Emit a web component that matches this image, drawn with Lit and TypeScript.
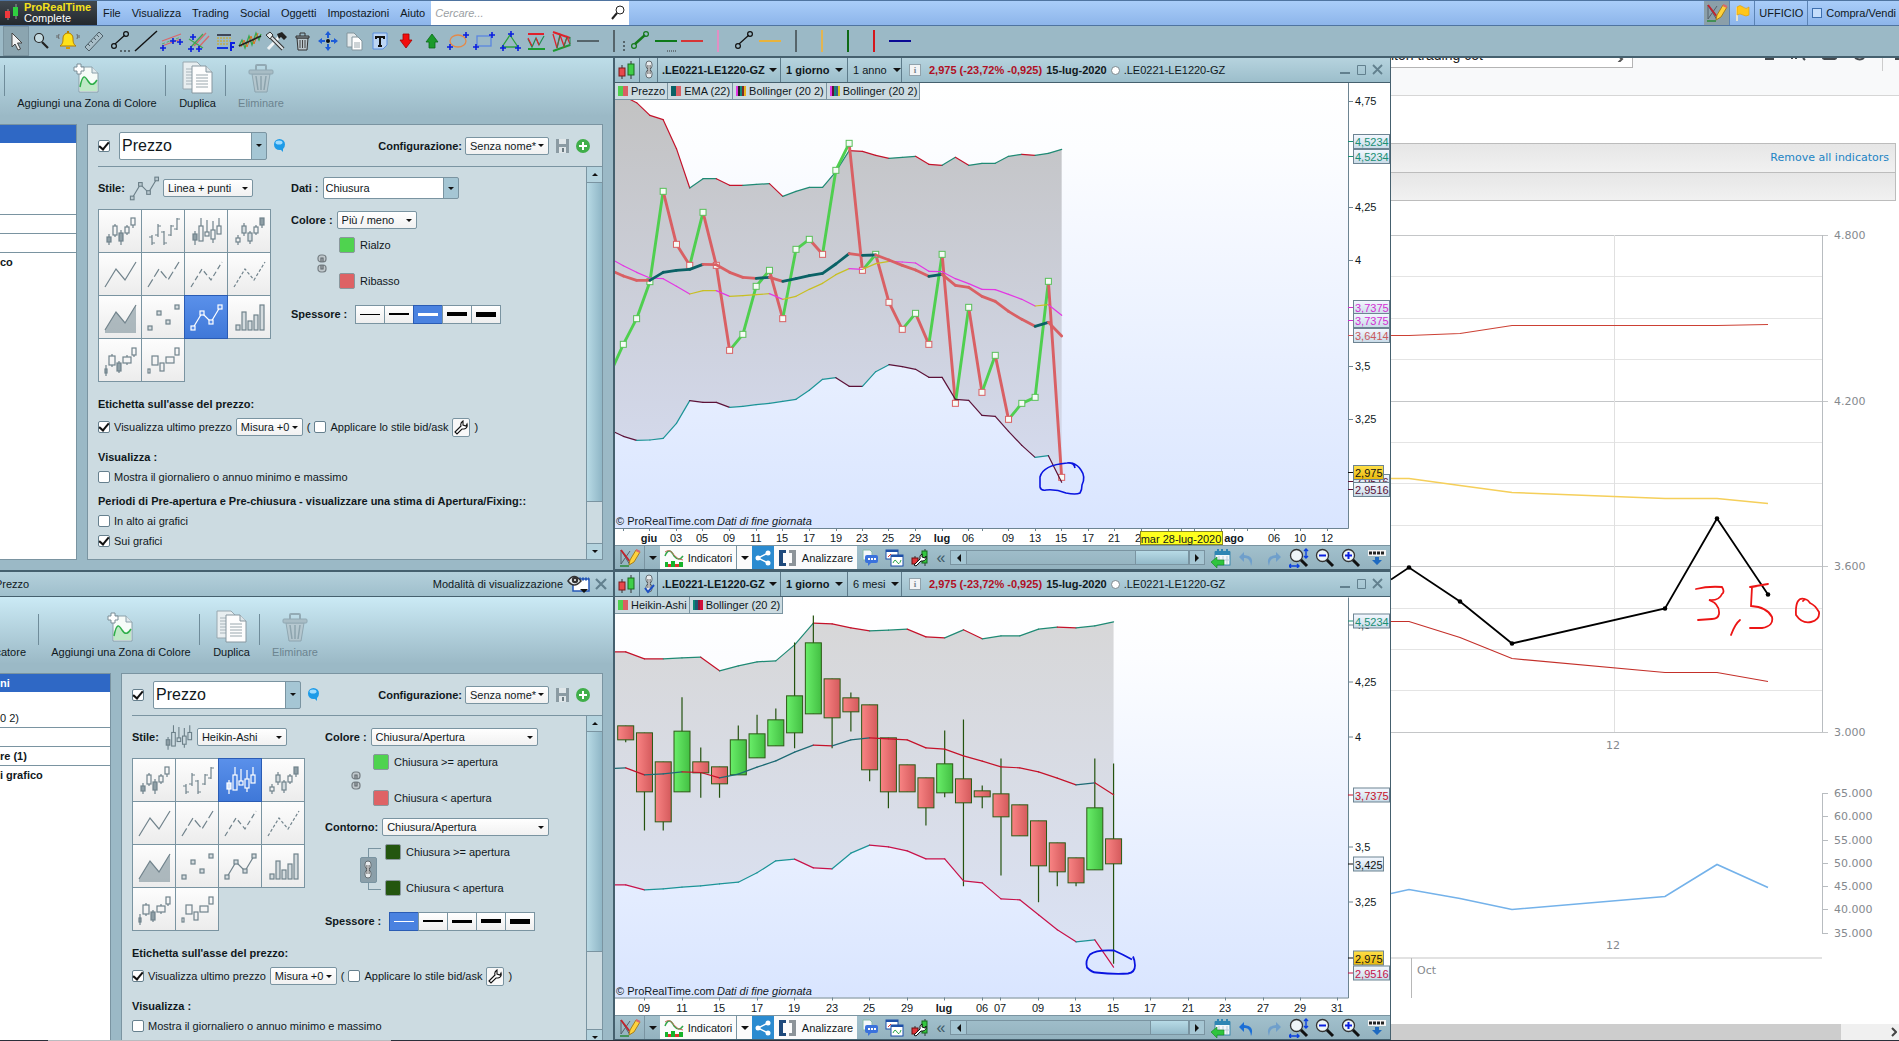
import { LitElement, html, svg, css, nothing } from "lit";
import { customElement, property } from "lit/decorators.js";
import { classMap } from "lit/directives/class-map.js";

/* ---------- shared styles ---------- */

const base = css`
  :host {
    --ink: #10181c;
    --edge: #7a94a1;
    --dark: #45606e;
    --steel: #9bb9c6;
    display: block;
    font: 11px/14px "Liberation Sans", Arial, sans-serif;
    color: var(--ink);
  }
  * { box-sizing: border-box; }
  svg { display: block; flex: none; }
  button, select, input { font: inherit; color: inherit; margin: 0; }
  button { border: 0; padding: 0; background: none; }
  .caret {
    width: 0; height: 0; flex: none;
    border: 4px solid transparent;
    border-top: 4px solid #111;
    border-bottom: 0;
  }
`;

/* ---------- small icon helpers ---------- */

const plus = (x: number, y: number) =>
  svg`<path d="M${x - 3} ${y}h6M${x} ${y - 3}v6" stroke="#0a1ee0" stroke-width="1.6" fill="none"/>`;

const segment = (c: string, w: number) => svg`
  <path d="M8 18L18 9" stroke=${c} stroke-width=${w}/>
  <circle cx="7" cy="20" r="2.4" fill="none" stroke=${c} stroke-width="1.2"/>
  <circle cx="19" cy="8" r="2.4" fill="none" stroke=${c} stroke-width="1.2"/>`;

const hbar = (c: string, w = 2) => svg`<path d="M2 15h22" stroke=${c} stroke-width=${w}/>`;
const vbar = (c: string, w = 2) => svg`<path d="M13 4v22" stroke=${c} stroke-width=${w}/>`;

const drawTools: [string, unknown][] = [
  ["Cursore", svg`<path d="M9 7v14l3-3 3 6 2.500-1-3-6h4.500z" fill="#f4f4f4" stroke="#444"/>`],
  ["Lente", svg`<circle cx="10" cy="12" r="4.500" fill="#c5dbe2" stroke="#222" stroke-width="1.200"/><path d="M13 16l6 6" stroke="#222" stroke-width="2.200"/>`],
  ["Allarme", svg`<path d="M5 20c3-2 3-5 3-8a5 5 0 0 1 10 0c0 3 0 6 3 8z" fill="#ffe11a" stroke="#b27b00"/><path d="M11 21h4v2h-4z" fill="#d89a00"/><path d="M13 5v2" stroke="#b27b00" stroke-width="2"/><path d="M4 8q-1 3 0 5M2 9v3M22 8q1 3 0 5M24 9v3" stroke="#666" fill="none"/>`],
  ["Righello", svg`<path d="M4 21L18 6l4 4L8 25z" fill="#a9bfc9" stroke="#4d5f68"/><path d="M7 18l2 2M10 15l2 2M13 12l2 2M16 9l2 2" stroke="#4d5f68"/>`],
  ["Segmento", svg`${segment("#111", 1.2)}<path d="M13 25h11" stroke="#111" stroke-dasharray="2 2"/>`],
  ["Retta", svg`<path d="M2 25L24 5" stroke="#111" stroke-width="1.400"/>`],
  ["Canale", svg`<path d="M3 15l19-7M3 20l19-7" stroke="#d8686c" stroke-width="1.300"/><path d="M3 18l19-7" stroke="#5db06a" stroke-dasharray="3 2"/>${plus(4, 22)}${plus(21, 16)}${plus(14, 15)}`],
  ["Pitchfork", svg`<path d="M9 20L21 7M13 22L24 10" stroke="#d8686c" stroke-width="1.300"/><path d="M4 13l14 9M6 21L18 8" stroke="#42a552" stroke-width="1.300"/>${plus(8, 11)}${plus(6, 23)}${plus(14, 23)}`],
  ["Fibonacci", svg`<path d="M6 9h14" stroke="#223" stroke-width="1.500"/><path d="M6 12h14M6 15h14M6 18h12" stroke="#d6a60d" stroke-dasharray="2 1"/><path d="M6 22h11" stroke="#1235e0" stroke-width="2"/><path d="M20 25v-8h4M20 21h3" stroke="#0a1ee0" stroke-width="2" fill="none"/>`],
  ["Regressione", svg`<path d="M2 20l3-6 3 8 4-12 3 9 4-12 3 7 2-6" stroke="#3aa64a" fill="none" stroke-width="1.300"/><path d="M4 21l3-7 3 7 4-11 3 8 4-11" stroke="#e2711c" fill="none"/><path d="M2 20L24 10" stroke="#222" stroke-width="1.600"/>`],
  ["Strumenti", svg`<path d="M5 23L18 9" stroke="#eef3f5" stroke-width="3"/><path d="M6 9l14 14" stroke="#333" stroke-width="4"/><path d="M6 9l14 14" stroke="#dfe6e9" stroke-width="2"/><path d="M14 8l5-2 5 5-3 3-3-3-2 2z" fill="#222"/><path d="M3 9l4-3 3 3-3 4z" fill="#e6ecee" stroke="#333"/>`],
  ["Cestino", svg`<path d="M8 12h11l-1 12H9z" fill="#b9c6cc" stroke="#333"/><path d="M11 14v8M13.500 14v8M16 14v8" stroke="#444"/><path d="M7 10h13v2H7z" fill="#8c9aa1" stroke="#333"/><path d="M11 10V7h5v3" stroke="#333" fill="none"/>`],
  ["Sposta", svg`<path d="M13 5l3 4h-6zM13 25l3-4h-6zM3 15l4-3v6zM23 15l-4-3v6z" fill="#1c5bd8"/><path d="M13 8v4M13 18v4M6 15h4M16 15h4" stroke="#1c5bd8" stroke-width="2"/><circle cx="13" cy="15" r="2" fill="#111"/>`],
  ["Copia", svg`<path d="M6 7h7l3 3v11H6z" fill="#e4eaec" stroke="#83959d"/><path d="M11 11h6l4 4v9H11z" fill="#fff" stroke="#83959d"/><path d="M13 17h6M13 19h6M13 21h6" stroke="#9aa7ad"/>`],
  ["Testo", svg`<path d="M6 7h14v12l-4 4H6z" fill="#bcd5f3" stroke="#5a8ede"/><path d="M9 13v-2h8v2M13 11v8M11 20h4" stroke="#111" stroke-width="2" fill="none"/>`],
  ["Freccia giù", svg`<path d="M10 8h6v6h3l-6 8-6-8h3z" fill="#f20d0d" stroke="#a80000" stroke-width=".8"/>`],
  ["Freccia su", svg`<path d="M10 22h6v-6h3l-6-8-6 8h3z" fill="#1a9a2a" stroke="#0b6a18" stroke-width=".8"/>`],
  ["Ellisse", svg`<ellipse cx="13" cy="15" rx="8" ry="6" fill="none" stroke="#e38a4a" stroke-width="1.300"/>${plus(21, 9)}${plus(5, 21)}`],
  ["Rettangolo", svg`<rect x="6" y="10" width="14" height="10" fill="none" stroke="#5a86e0" stroke-width="1.300"/>${plus(21, 9)}${plus(5, 21)}`],
  ["Triangolo", svg`<path d="M13 9l8 12H5z" fill="none" stroke="#2da03e" stroke-width="1.300"/>${plus(14, 8)}${plus(6, 22)}${plus(21, 22)}`],
  ["Figura W", svg`<path d="M5 8h16" stroke="#e0202b" stroke-width="2"/><path d="M5 23h17" stroke="#1d9a32" stroke-width="2"/><path d="M5 13l4 8 4-9 3 7 5-9" fill="none" stroke="#1f8a50" stroke-width="1.200"/><path d="M5 12l4 8M13 12l3 7" stroke="#e0202b" stroke-width="1.200"/>`],
  ["Figura triangolo", svg`<path d="M4 6l17 6" stroke="#e0202b" stroke-width="2"/><path d="M4 25l17-6" stroke="#1d9a32" stroke-width="2"/><path d="M4 8l4 14 3-13 4 11 3-9 3 7" fill="none" stroke="#e0202b" stroke-width="1.300"/><path d="M8 22l3-13M15 20l3-9M21 11v9" stroke="#1f8a50"/>`],
  ["Linea orizzontale", hbar("#111", 1)],
  ["Linea verticale", svg`${vbar("#111", 1)}<path d="M23 15v11" stroke="#111" stroke-dasharray="2 2"/>`],
  ["Segmento verde", segment("#157a1c", 2.4)],
  ["Linea verde", svg`${hbar("#0d7a1a")}<path d="M14 25h9" stroke="#333" stroke-dasharray="1 1"/>`],
  ["Linea rossa", hbar("#d63535")],
  ["Verticale rosa", vbar("#e08fc4")],
  ["Segmento nero", segment("#111", 1.2)],
  ["Linea gialla", hbar("#e9b33c")],
  ["Verticale nera", vbar("#111", 1)],
  ["Verticale gialla", vbar("#e3b551")],
  ["Verticale verde", vbar("#0d6a14")],
  ["Verticale rossa", vbar("#d4161c")],
  ["Linea blu", hbar("#0a0a94")],
];

const candle = (x: number, y0: number, t: number, b: number, y1: number, w: number, fill: string) => svg`
  <path d="M${x} ${y0}V${t}M${x} ${b}V${y1}"/>
  <rect x=${x - w / 2} y=${t} width=${w} height=${b - t} fill=${fill}/>`;

type IconMaker = (solid: string, pale: string) => unknown;
const zig = "M6 34L17 16L26 27L37 9";
const square = (x: number, y: number, f: string) => svg`<rect x=${x - 2} y=${y - 2} width="4" height="4" fill=${f}/>`;
const points = (f: string) => [[8, 32], [17, 17], [26, 26], [35, 11]].map(([x, y]) => square(x, y, f));

const styleIcons: IconMaker[] = [
  (s) => [candle(10, 24, 27, 32, 35, 4, s), candle(16, 14, 16, 25, 27, 4, "none"), candle(22, 20, 23, 31, 35, 4, s), candle(28, 15, 17, 23, 25, 4, "none"), candle(34, 8, 8, 15, 18, 4, "none")],
  () => svg`<path d="M10 25v10M7 27h3M10 33h3M16 14v13M13 25h3M16 16h3M22 21v14M19 22h3M22 33h3M29 15v11M26 25h3M29 16h3M35 8v12M32 19h3M35 9h3" fill="none"/>`,
  (s) => [candle(10, 21, 24, 30, 35, 4, s), candle(16, 8, 16, 31, 31, 4, "none"), candle(22, 10, 22, 26, 26, 4, "none"), candle(28, 11, 20, 29, 33, 4, "none"), candle(34, 8, 16, 24, 24, 4, "none")],
  (s, p) => [candle(10, 25, 28, 32, 35, 4, "none"), candle(16, 13, 16, 23, 26, 4, p), candle(22, 21, 23, 31, 34, 4, p), candle(28, 15, 17, 23, 25, 4, "none"), candle(34, 8, 8, 15, 18, 4, s)],
  () => svg`<path d=${zig} fill="none"/>`,
  () => svg`<path d=${zig} fill="none" stroke-dasharray="9 3"/>`,
  () => svg`<path d=${zig} fill="none" stroke-dasharray="5 3"/>`,
  () => svg`<path d=${zig} fill="none" stroke-dasharray="3 2"/>`,
  (s) => svg`<path d="M6 34L17 16L26 27L37 9V37H6z" fill=${s} fill-opacity=".7" stroke="none"/><path d=${zig} fill="none"/>`,
  (_s, p) => points(p),
  (_s, p) => [svg`<path d="M8 32L17 17L26 26L35 11" fill="none"/>`, points(p)],
  (_s, p) => [[8, 29], [14, 16], [20, 25], [26, 19], [32, 9]].map(([x, y]) => svg`<rect x=${x} y=${y} width="4" height=${34 - y} fill=${p}/>`),
  (s) => [candle(7, 26, 30, 34, 37, 2, s), candle(13, 15, 17, 26, 28, 6, "none"), candle(20, 22, 24, 32, 34, 4, s), candle(28, 16, 18, 24, 26, 8, "none"), candle(35, 9, 9, 16, 18, 4, "none")],
  () => [candle(7, 30, 30, 34, 34, 2, "none"), candle(13, 17, 17, 26, 26, 6, "none"), candle(20, 24, 24, 32, 32, 4, "none"), candle(28, 18, 18, 24, 24, 8, "none"), candle(35, 9, 9, 16, 16, 4, "none")],
];

const styleNames = ["Candele", "Barre", "Heikin-Ashi", "Candele inverse", "Linea", "Linea tratteggiata lunga", "Linea tratteggiata", "Linea punteggiata", "Area", "Punti", "Linea + punti", "Istogramma", "Candle volume", "Equivolume"];

const styleIcon = (i: number, stroke: string, solid: string, pale: string) => html`
  <svg width="42" height="42" viewBox="0 0 42 42" stroke=${stroke} stroke-width="1.2">${styleIcons[i](solid, pale)}</svg>`;

/* ---------- settings panel ---------- */

const zoneIcon = html`<svg width="28" height="31" viewBox="0 0 28 31">
  <path d="M6 4h13l6 6v19H6z" fill="#f6fbf8" stroke="#8aa0aa"/>
  <path d="M7 24c3-16 6-9 8-6 3 5 6 4 9-1v11H7z" fill="#bfe9c6"/>
  <path d="M7 24c3-16 6-9 8-6 3 5 6 4 9-1" fill="none" stroke="#2fae4a" stroke-width="1.500"/>
  <path d="M19 4v6h6" fill="#dfe8ec" stroke="#8aa0aa"/>
  <path d="M4 1h4v3h3v4H8v3H4V8H1V4h3z" fill="#fff" stroke="#7a8d96"/></svg>`;
const copyIcon = html`<svg width="32" height="33" viewBox="0 0 32 33">
  <path d="M1 1h14l5 5v22H1z" fill="#e8eef0" stroke="#98a8b0"/>
  <path d="M4 8h6M4 11h6M4 14h6M4 17h6M4 20h6M4 23h6" stroke="#a8b4ba"/>
  <path d="M10 5h14l6 6v21H10z" fill="#fdfdfd" stroke="#8797a0"/><path d="M24 5v6h6" fill="#dde5e8" stroke="#8797a0"/>
  <path d="M14 14h12M14 17h12M14 20h12M14 23h12M14 26h12" stroke="#9aa7ad"/></svg>`;
const binIcon = html`<svg width="28" height="31" viewBox="0 0 28 31" opacity=".7">
  <path d="M5 11h18l-3 18H8z" fill="#b6c3c9" stroke="#8296a0"/>
  <path d="M9 13l2 14M14 13v14M19 13l-2 14" stroke="#7f929b" stroke-width="1.500"/>
  <rect x="2" y="7" width="24" height="4" rx="1" fill="#a3b3ba" stroke="#8296a0"/>
  <path d="M9 7V3q0-1 1-1h8q1 0 1 1v4" fill="none" stroke="#8296a0" stroke-width="2"/></svg>`;
const looseChain = html`<svg width="10" height="19" viewBox="0 0 10 19" fill="none" stroke="#757e83" stroke-width="1.200">
  <rect x="1" y="1" width="8" height="7" rx="3" fill="#c0c8cc"/><rect x="1" y="11" width="8" height="7" rx="3" fill="#c0c8cc"/>
  <path d="M4 8V4h2v4M4 11v4h2v-4" stroke="#5f686d"/></svg>`;
const chain = (done: boolean) => html`<svg width="14" height="20" viewBox="0 0 14 20" fill="none" stroke="#666f74">
  <rect x="4" y="1" width="6" height="8" rx="3" fill="#e8ecee"/><rect x="4" y="10" width="6" height="8" rx="3" fill="#e8ecee"/>
  <path d="M7 5v9" stroke="#444" stroke-width="3"/><path d="M7 5v9" stroke="#fff" stroke-width="1.200"/>
  ${done ? svg`<path d="M3 14l3 4 6-7" stroke="#1c4fc4" stroke-width="2"/>` : nothing}</svg>`;

@customElement("style-panel")
export class StylePanel extends LitElement {
  @property() mode: "line" | "heikin" = "line";

  static styles = [base, css`
    :host { display: flex; flex-direction: column; min-height: 0; overflow: hidden; background: var(--steel); border-top: 2px solid var(--dark); }
    .title { display: flex; align-items: center; height: 25px; flex: none; border-bottom: 1px solid var(--dark); background: linear-gradient(#b4d0db, #9fbfcc); padding-right: 6px; }
    .title .name { margin-right: auto; margin-left: -5px; }
    .title button { width: 12px; margin-left: 4px; }
    .title .eye { width: 24px; }
    .head { display: flex; align-items: flex-end; flex: none; height: 66px; padding: 0 0 14px 4px; background: linear-gradient(#bddde8, var(--steel) 88%); }
    .heikin .head { height: 76px; padding-left: 38px; background: linear-gradient(#cbeaf5, var(--steel) 88%); position: relative; }
    .act { display: flex; flex-direction: column; align-items: center; justify-content: flex-end; gap: 2px; height: 46px; white-space: nowrap; }
    .act span { height: 14px; }
    .act.zone { width: 160px; padding-left: 4px; }
    .act.dup { width: 59px; padding-left: 4px; }
    .act.del { width: 70px; color: #6c8490; }
    .bar { width: 1px; height: 31px; background: #6f8c9a; align-self: flex-start; margin-top: 7px; }
    .heikin .bar { margin-top: 17px; }
    .clipped { position: absolute; left: -7px; bottom: 14px; height: 14px; }
    .body { display: flex; flex: 1; min-height: 0; gap: 10px; padding: 0 10px 10px 0; }
    .heikin .body { margin-bottom: -6px; padding-bottom: 0; }
    .list { width: 77px; flex: none; background: #fff; border: 1px solid var(--edge); border-left: 0; overflow: hidden; font-weight: bold; }
    .heikin .list { width: 111px; }
    .list div { height: 19px; line-height: 19px; white-space: nowrap; }
    .list .plain { font-weight: normal; }
    .list .on { height: 18px; background: #2f68c5; color: #fff; }
    .list .rule { border-bottom: 1px solid var(--edge); }
    .list .blank { height: 53px; }
    .heikin .list .blank { height: 17px; }
    .card { flex: 1; min-width: 0; display: flex; flex-direction: column; background: #ccdbe1; border: 1px solid var(--edge); }
    .top { display: flex; align-items: center; height: 42px; flex: none; margin-left: 10px; padding-right: 12px; border-bottom: 1px solid var(--edge); }
    .top .push { margin-left: auto; }
    .top .file { margin-left: 3px; }
    b { font-weight: bold; white-space: nowrap; }
    .cols { display: flex; flex: 1; min-height: 0; }
    .main { flex: 1; min-width: 0; padding-left: 10px; overflow: hidden; white-space: nowrap; }
    .split { display: flex; gap: 20px; height: 215px; }
    .left { width: 173px; flex: none; }
    .right { padding-top: 5px; }
    .row { display: flex; align-items: center; height: 20px; gap: 4px; }
    .stile { height: 42px; }
    .stile svg { margin: 0 -4px; width: 38px; height: 38px; }
    .grid { display: flex; flex-wrap: wrap; width: 174px; padding: 0 1px 1px 0; }
    .cell { width: 44px; height: 44px; margin: 0 -1px -1px 0; border: 1px solid var(--edge); background: linear-gradient(#fdfdfd, #ececec); }
    .cell.on { background: linear-gradient(#5a90ea, #3f78d8); border-color: #2a5cb4; position: relative; }
    .pick { position: relative; display: inline-flex; align-items: center; height: 18px; flex: none; }
    .pick::after { content: ""; position: absolute; right: 5px; border: 3px solid transparent; border-top-color: #111; border-bottom: 0; pointer-events: none; }
    .pick select { appearance: none; width: 100%; height: 100%; padding: 0 10px 0 4px; border: 1px solid var(--edge); border-radius: 2px; background: linear-gradient(#fff, #f1f1f1); }
    .pick.box select { background: linear-gradient(90deg, #fff calc(100% - 15px), var(--edge) calc(100% - 15px), var(--edge) calc(100% - 14px), #a5c6d4 calc(100% - 14px)); padding-left: 2px; }
    .price { width: 148px; height: 28px; font-size: 16px; margin: 0 6px 0 9px; }
    .w84 { width: 84px; } .w90 { width: 90px; } .w80 { width: 80px; } .w67 { width: 67px; } .w167 { width: 167px; }
    .data { width: 136px; height: 22px; }
    input[type="checkbox"] { appearance: none; width: 12px; height: 12px; flex: none; background: #fff; border: 1px solid #66808e; border-radius: 2px; display: grid; place-items: center; }
    input:checked::before { content: ""; width: 4px; height: 8px; margin-top: -2px; border: solid #111; border-width: 0 2px 2px 0; rotate: 40deg; }
    .pair { display: grid; grid-template-columns: 48px 1fr; }
    .pair.wide { grid-template-columns: 60px 1fr; }
    .pair .lk { display: grid; place-items: center; padding-left: 14px; }
    .pair .tone { display: flex; flex-direction: column; gap: 18px; }
    .tone label { display: flex; align-items: center; gap: 5px; height: 18px; }
    .tone i { width: 16px; height: 16px; border: 1px solid #8a979d; border-radius: 2px; }
    .joined { display: grid; place-items: center; width: 17px; height: 26px; background: #8b9fa9; border: 1px solid var(--edge); border-radius: 2px; }
    .wide .lk { padding: 0; position: relative; }
    .wide .lk::before { content: ""; position: absolute; left: 43px; right: 4px; top: 5px; bottom: 7px; border: 1px solid var(--edge); border-right: 0; }
    .wide .joined { position: relative; margin-left: 26px; }
    .f { height: 32px; }
    .gap { margin-top: 4px; }
    .weights { margin-top: 14px; gap: 8px; }
    .widths { display: flex; }
    .widths button { display: grid; place-items: center; width: 30px; height: 19px; margin-right: -1px; border: 1px solid var(--edge); background: linear-gradient(#fff, #eee); }
    .widths i { width: 20px; background: #000; }
    .widths .on { background: #4a82e0; border-color: #2a5cb4; }
    .widths .on i { background: #fff; }
    .sect { margin-top: 12px; }
    .s7 { margin-top: 7px; }
    .tall { height: 26px; }
    .wr { width: 18px; height: 19px; border: 1px solid var(--edge); border-radius: 2px; background: #f8f8f8; display: grid; place-items: center; }
    .scroll { width: 16px; flex: none; display: flex; flex-direction: column; border-left: 1px solid var(--edge); background: #ccdbe1; }
    .scroll button { height: 15px; flex: none; display: grid; place-items: center; background: #b4d3de; }
    .scroll .thumb { flex: 0 1 320px; border: solid var(--edge); border-width: 1px 0; background: linear-gradient(90deg, #b8dae5, #8fb6c6); }
    .heikin .scroll .thumb { flex-basis: 221px; }
    .scroll .rest { flex: 1 0 0; border-bottom: 1px solid var(--edge); }
    .scroll .caret { border-width: 3px 3px 0; }
    .up { rotate: 180deg; }
    .wrap { display: flex; flex-direction: column; flex: 1; min-height: 0; }
  `];

  private pick(id: string, text: string, cls: string) {
    return html`<span class="pick ${cls}"><select id=${id} aria-label=${text}><option>${text}</option></select></span>`;
  }

  private pair(up: string, down: string, c1: string, c2: string, linked = false) {
    return html`<div class=${classMap({ pair: true, wide: linked })}>
      <div class="lk">${linked ? html`<button class="joined" aria-label="Colori collegati">${chain(false)}</button>` : looseChain}</div>
      <div class="tone">
        <label><i style="background:${c1}"></i>${up}</label>
        <label><i style="background:${c2}"></i>${down}</label>
      </div></div>`;
  }

  private weights(active: number) {
    return html`<div class="row weights"><b>Spessore :</b><div class="widths">
      ${[1, 2, 3, 4, 5].map((w, i) => html`<button class=${i === active ? "on" : ""} aria-label="Spessore ${w}"><i style="height:${w}px"></i></button>`)}
    </div></div>`;
  }

  render() {
    const line = this.mode === "line";
    const active = line ? 10 : 2;
    return html`<div class="wrap ${this.mode}">
      ${line ? nothing : html`<div class="title"><span class="name">Prezzo</span><span>Modalità di visualizzazione</span>
        <button class="eye" aria-label="Vista"><svg width="24" height="20" viewBox="0 0 24 20">
          <path d="M6 5h16v12H6z" fill="#fff" stroke="#2558b8" stroke-width="1.500"/><path d="M6 5h16" stroke="#2558b8" stroke-width="3" stroke-dasharray="2 1"/>
          <path d="M1 7q6-9 13 0-7 8-13 0z" fill="#e8eef0" stroke="#333" stroke-width="1.500"/><circle cx="8" cy="6" r="3.200" fill="#333"/><circle cx="8" cy="6" r="1" fill="#fff"/>
          <path d="M13 15h8l-4 4z" fill="#111"/></svg></button>
        <button aria-label="Chiudi"><svg width="12" height="12" viewBox="0 0 12 12"><path d="M1 1l10 10M11 1L1 11" stroke="#62808e" stroke-width="2.200"/></svg></button></div>`}
      <div class="head">
        ${line ? nothing : html`<span class="clipped">icatore</span>`}
        <i class="bar"></i><button class="act zone">${zoneIcon}<span>Aggiungi una Zona di Colore</span></button>
        <i class="bar"></i><button class="act dup">${copyIcon}<span>Duplica</span></button>
        <i class="bar"></i><button class="act del" disabled>${binIcon}<span>Eliminare</span></button>
      </div>
      <div class="body">
        <div class="list">${line
          ? html`<div class="on"></div><div class="blank"></div><div class="rule"></div><div class="rule"></div><div class="rule"></div><div>co</div>`
          : html`<div class="on">ni</div><div class="blank"></div><div class="rule plain">0 2)</div><div class="rule"></div><div class="rule">re (1)</div><div>i grafico</div>`}
        </div>
        <div class="card">
          <div class="top">
            <input type="checkbox" checked aria-label="Mostra prezzo" />
            ${this.pick("name", "Prezzo", "box price")}
            <svg width="13" height="13" viewBox="0 0 13 13"><circle cx="6.500" cy="5.500" r="5.500" fill="#1d9be8"/><ellipse cx="6" cy="3.500" rx="3.500" ry="2" fill="#9fdcff"/><path d="M7 10l3 3v-4z" fill="#1d9be8"/></svg>
            <b class="push">Configurazione:&nbsp;</b>${this.pick("conf", "Senza nome*", "w84")}
            <svg class="file" width="38" height="14" viewBox="0 0 38 14"><path d="M4 0h13v14H4z" fill="#8b9ba3"/><path d="M7 0h7v5H7zM7 8h7v6H7z" fill="#dfe6e9"/><path d="M11 9v4" stroke="#6c7b82" stroke-width="2"/><circle cx="31" cy="7" r="7" fill="#3fae49"/><path d="M31 3v8M27 7h8" stroke="#fff" stroke-width="2"/></svg>
          </div>
          <div class="cols">
            <div class="main">
              <div class="split">
                <div class="left">
                  <div class="row stile"><b>Stile:</b>${styleIcon(active, "#6b7f88", "#8c9da5", "#b9c9d0")}${this.pick("stile", line ? "Linea + punti" : "Heikin-Ashi", "w90")}</div>
                  <div class="grid">${styleNames.map((n, i) => html`<button class="cell ${i === active ? "on" : ""}" aria-label=${n}>
                    ${i === active ? styleIcon(i, "#fff", "#d6e4fb", "#5a90ea") : styleIcon(i, "#71838c", "#8f9fa6", "#d5dcdf")}</button>`)}</div>
                </div>
                <div class="right">
                  ${line ? html`
                    <div class="row f"><b>Dati :</b>${this.pick("dati", "Chiusura", "box data")}</div>
                    <div class="row f"><b>Colore :</b>${this.pick("col", "Più / meno", "w80")}</div>
                    ${this.pair("Rialzo", "Ribasso", "#4fd34f", "#de6265")}${this.weights(2)}`
                  : html`
                    <div class="row f"><b>Colore :</b>${this.pick("col", "Chiusura/Apertura", "w167")}</div>
                    ${this.pair("Chiusura >= apertura", "Chiusura < apertura", "#4fd34f", "#de6265")}
                    <div class="row f gap"><b>Contorno:</b>${this.pick("cont", "Chiusura/Apertura", "w167")}</div>
                    ${this.pair("Chiusura >= apertura", "Chiusura < apertura", "#24560f", "#24560f", true)}${this.weights(0)}`}
                </div>
              </div>
              <div class="row sect"><b>Etichetta sull'asse del prezzo:</b></div>
              <div class="row tall"><input id="last" type="checkbox" checked /><label for="last">Visualizza ultimo prezzo</label>${this.pick("mis", "Misura +0", "w67")}<span>(</span><input id="bid" type="checkbox" /><label for="bid">Applicare lo stile bid/ask</label>
                <button class="wr" aria-label="Impostazioni stile"><svg width="14" height="15" viewBox="0 0 14 15"><path d="M1 12l6-6q-1-3 2-5v4l3 1 1-2q1 4-3 5H8l-5 5z" fill="#fff" stroke="#111" stroke-width="1.100"/></svg></button><span>)</span></div>
              <div class="row s7"><b>Visualizza :</b></div>
              <div class="row"><input id="mm" type="checkbox" /><label for="mm">Mostra il giornaliero o annuo minimo e massimo</label></div>
              ${line ? html`
                <div class="row gap"><b>Periodi di Pre-apertura e Pre-chiusura - visualizzare una stima di Apertura/Fixing::</b></div>
                <div class="row"><input id="alto" type="checkbox" /><label for="alto">In alto ai grafici</label></div>
                <div class="row"><input id="sui" type="checkbox" checked /><label for="sui">Sui grafici</label></div>` : nothing}
            </div>
            <div class="scroll"><button aria-label="Su"><i class="caret up"></i></button><i class="thumb"></i><i class="rest"></i><button aria-label="Giù"><i class="caret"></i></button></div>
          </div>
        </div>
      </div></div>`;
  }
}

/* ---------- chart window ---------- */

type Pt = [number, number];
/* Series levels are kept in thirds of a pixel below the origin row. */
const track = (x0: number, dx: number, y0: number, v: number[]): Pt[] =>
  v.map((n, i) => [x0 + dx * (i - 1), y0 + n / 3] as Pt);

/* A two-tone line: one colour while it climbs, another while it falls. */
const twoTone = (p: Pt[], up: string, down: string, w: number) => {
  let c = down;
  return p.slice(1).map((q, i) => {
    const a = p[i];
    if (q[1] < a[1]) c = up;
    else if (q[1] > a[1]) c = down;
    return svg`<path d="M${a[0]} ${a[1]}L${q[0]} ${q[1]}" stroke=${c} stroke-width=${w} stroke-linecap="round"/>`;
  });
};

const ring = (a: Pt[], b: Pt[]) => "M" + [...a, ...[...b].reverse()].map((p) => p.join(" ")).join("L") + "z";

const A = (v: number[]) => track(623.33, 13.283, 80, v);
const dayHigh = A([35, 48, 68, 106, 119, 206, 324, 296, 296, 316, 316, 313, 311, 349, 334, 322, 322, 275, 212, 214, 226, 235, 232, 229, 253, 256, 232, 256, 250, 250, 229, 223, 226, 220, 208]);
const dayLow = A([1050, 1069, 1081, 1080, 1075, 1030, 962, 967, 967, 982, 979, 974, 970, 964, 958, 931, 898, 893, 919, 919, 875, 854, 860, 868, 892, 892, 958, 961, 1006, 1009, 1054, 1096, 1132, 1127, 1207]);
const dayMid = A([535, 557, 577, 594, 596, 619, 642, 632, 632, 649, 647, 644, 641, 658, 649, 628, 610, 584, 566, 568, 551, 544, 546, 549, 574, 575, 596, 611, 628, 629, 643, 658, 678, 674, 706]);
const dayEma = A([570, 588, 601, 601, 577, 571, 568, 553, 554, 577, 592, 595, 592, 604, 596, 587, 580, 552, 521, 526, 525, 540, 556, 570, 589, 583, 616, 622, 649, 664, 694, 718, 739, 727, 768]);
const dayClose = A([881, 793, 716, 605, 334, 493, 556, 397, 556, 811, 763, 619, 571, 716, 508, 478, 523, 271, 190, 571, 523, 667, 748, 700, 793, 523, 970, 682, 937, 826, 1018, 970, 952, 604, 1192]);

const B = (v: number[]) => track(625.71, 18.764, 570, v);
const haHigh = B([244, 244, 265, 265, 262, 260, 301, 286, 274, 271, 223, 158, 160, 172, 181, 179, 176, 199, 202, 178, 205, 196, 196, 176, 170, 172, 166, 154]);
const haMid = B([595, 592, 613, 610, 604, 606, 622, 611, 590, 571, 545, 524, 526, 508, 502, 505, 508, 532, 536, 556, 572, 589, 592, 604, 623, 643, 637, 673]);
const haLow = B([943, 943, 958, 955, 950, 946, 940, 935, 907, 871, 866, 892, 895, 848, 824, 829, 841, 865, 865, 931, 937, 985, 988, 1033, 1078, 1114, 1108, 1190]);
/* high, body top, body bottom, low, rising */
const candles: [number, number, number, number, number][] = [
  [466, 466, 508, 515, 0], [487, 487, 664, 780, 0], [574, 574, 754, 780, 0], [380, 482, 664, 664, 1], [531, 574, 607, 682, 0],
  [589, 589, 640, 682, 0], [465, 508, 613, 613, 1], [433, 490, 562, 562, 1], [414, 448, 526, 526, 1], [216, 376, 487, 533, 1],
  [135, 217, 430, 430, 1], [325, 325, 442, 533, 0], [366, 382, 424, 483, 0], [403, 403, 598, 632, 0], [502, 502, 664, 713, 0],
  [583, 583, 664, 664, 0], [622, 622, 712, 765, 0], [480, 580, 667, 680, 1], [447, 625, 697, 947, 0], [645, 661, 679, 713, 0],
  [564, 670, 739, 915, 0], [703, 703, 796, 796, 0], [751, 751, 886, 995, 0], [817, 817, 904, 947, 0], [862, 862, 937, 947, 0],
  [564, 712, 898, 898, 1], [579, 805, 880, 1180, 0],
];

type Tag = [y: number, text: string, color: string, kind?: string];
interface Win {
  period: string;
  done: boolean;
  legend: [string, string[]][];
  top: number;
  base: number;
  prices: [number, string][];
  tags: Tag[];
  dates: [number, string][];
  ticks: number[];
  thumb: number;
}

const windows: Record<string, Win> = {
  day: {
    period: "1 anno", done: false,
    legend: [["Prezzo", ["#4fcf4f", "#d96064"]], ["EMA (22)", ["#0a6266", "#d96064"]], ["Bollinger (20 2)", ["#e337e3", "#222", "#12897a", "#7a2a2a", "#e8b21c"]], ["Bollinger (20 2)", ["#e337e3", "#5c1238", "#12897a", "#3b5c8a", "#d6c61c"]]],
    top: 83, base: 528,
    prices: [[101, "4,75"], [207, "4,25"], [260, "4"], [366, "3,5"], [419, "3,25"]],
    tags: [[134, "4,5234", "#1a8f74"], [149, "4,5234", "#1a8f74"], [300, "3,7375", "#d22fd2"], [313, "3,7375", "#d22fd2"], [328, "3,6414", "#c9585c"], [474, "2,9516", "#5c1238"], [482, "2,9516", "#5c1238"], [465, "2,975", "#111", "gold"]],
    dates: [[649, "giu"], [676, "03"], [702, "05"], [729, "09"], [756, "11"], [782, "15"], [809, "17"], [836, "19"], [862, "23"], [888, "25"], [915, "29"], [942, "lug"], [968, "06"], [1008, "09"], [1035, "13"], [1061, "15"], [1088, "17"], [1114, "21"], [1141, "23"], [1234, "ago"], [1274, "06"], [1300, "10"], [1327, "12"]],
    ticks: [623, 982, 1168, 1181, 1194, 1221, 1247],
    thumb: 54,
  },
  ha: {
    period: "6 mesi", done: true,
    legend: [["Heikin-Ashi", ["#4fcf4f", "#d96064"]], ["Bollinger (20 2)", ["#0a8a78", "#1d5a74", "#8a1a3a", "#d0103a"]]],
    top: 597, base: 997,
    prices: [[624, "4,5"], [681, "4,25"], [736, "4"], [846, "3,5"], [901, "3,25"]],
    tags: [[613, "4,5234", "#1a8f74"], [787, "3,7375", "#c4122a"], [856, "3,425", "#111", "short"], [965, "2,9516", "#c4124a"], [950, "2,975", "#111", "gold"]],
    dates: [[644, "09"], [682, "11"], [719, "15"], [757, "17"], [794, "19"], [832, "23"], [869, "25"], [907, "29"], [944, "lug"], [982, "06"], [1000, "07"], [1038, "09"], [1075, "13"], [1113, "15"], [1150, "17"], [1188, "21"], [1225, "23"], [1263, "27"], [1300, "29"], [1337, "31"]],
    ticks: [],
    thumb: 39,
  },
};

const pencil = html`<svg width="22" height="20" viewBox="0 0 22 20"><path d="M1 18h9" stroke="#2a8a3a" stroke-width="1.500"/><path d="M2 2l9 15M2 2v14l9-13" fill="none" stroke="#55606a"/><path d="M2 2l10 13" stroke="#c4202a" stroke-width="1.800"/><path d="M10 17l1-5 6-10 4 2-6 10z" fill="#ffd23c" stroke="#a8801a"/><path d="M17 2l4 2" stroke="#d96a6a" stroke-width="2"/></svg>`;
const lens = (inner: unknown) => html`<svg width="20" height="20" viewBox="0 0 20 20"><path d="M11 11l7 7" stroke="#111" stroke-width="3"/><circle cx="7.500" cy="7.500" r="6" fill="#eef5f8" stroke="#333" stroke-width="1.300"/>${inner}</svg>`;
const curve = (c: string) => svg`<path d="M6 3L1 8l5 5V9q6-1 7 8 4-10-7-11z" fill=${c}/>`;

@customElement("chart-window")
export class ChartWindow extends LitElement {
  @property() name = "day";

  static styles = [base, css`
    :host { display: flex; flex-direction: column; min-height: 0; border: solid var(--dark); border-width: 2px 1px 0 2px; overflow: hidden; background: #fff; }
    .title, .tools { display: flex; align-items: stretch; flex: none; white-space: nowrap; height: 25px; }
    .title { border-bottom: 1px solid var(--dark); background: linear-gradient(#b6d3de, #9cbecb); }
    .title > * { display: flex; align-items: center; }
    .cell { border-right: 1px solid #5d7b8a; padding: 0 5px; gap: 6px; }
    .cell.i { padding: 0 2px; width: 25px; justify-content: center; }
    .cell.c { width: 18px; padding: 0; justify-content: center; }
    .sym { width: 123px; padding: 0 6px 0 4px; gap: 4px; }
    .uno { width: 67px; justify-content: space-between; }
    .per { width: 54px; justify-content: space-between; }
    .quote { font-weight: bold; padding-left: 7px; gap: 4px; }
    .quote .info { display: grid; place-items: center; width: 12px; height: 12px; background: #f2f4f5; border: 1px solid #90a2ab; font: bold 9px/10px "Liberation Serif", serif; color: #76868e; margin-right: 4px; }
    .quote em { font-style: normal; color: #b00f24; }
    .quote .dot { width: 9px; height: 9px; border-radius: 50%; background: #fff; border: 1px solid #7c898f; }
    .quote .sub { font-weight: normal; }
    .sys { margin-left: auto; gap: 5px; padding-right: 6px; }
    .plot { position: relative; flex: 1; min-height: 0; }
    .plot > svg { width: 100%; height: 100%; }
    .legend { position: absolute; left: 0; top: 0; display: flex; }
    .legend button { display: flex; align-items: center; gap: 3px; height: 17px; padding: 0 2px 0 3px; background: #ccdbe1; border: solid var(--edge); border-width: 0 1px 1px 0; white-space: nowrap; }
    .sw { display: flex; width: 10px; height: 10px; }
    .sw i { flex: 1; }
    .tip { fill: #ffff1e; stroke: #8a8a20; }
    text { font: 11px "Liberation Sans", Arial, sans-serif; fill: #10181c; }
    .mid { text-anchor: middle; }
    .bold { font-weight: bold; }
    .ital { font-style: italic; }
    .tools { background: linear-gradient(#a2c0cc, #93b2bf); align-items: center; border-bottom: 1px solid var(--dark); border-top: 1px solid var(--edge); }
    .tools > button { display: flex; align-items: center; justify-content: center; height: 100%; flex: none; }
    .tools > .pen { width: 30px; border-right: 1px solid var(--edge); }
    .drop { width: 15px; }
    .white { background: #fbfbfb; }
    .ind { width: 77px; gap: 4px; border-right: 1px solid var(--edge); }
    .share { width: 22px; background: #2b8bd0; }
    .ana { width: 83px; gap: 5px; }
    .ic { width: 25px; }
    .w18 { width: 18px; color: #3e5a67; font-size: 16px; }
    .scroll { display: flex; flex: 1; height: 15px; border: 1px solid var(--edge); min-width: 0; }
    .scroll button { width: 15px; display: grid; place-items: center; background: #a5c6d3; }
    .scroll .track { flex: 1; border-left: 1px solid var(--edge); }
    .scroll .thumb { border: solid var(--edge); border-width: 0 1px; background: linear-gradient(#b7dae6, #94bac9); }
    .scroll .end { border-left: 1px solid var(--edge); }
    .l { rotate: 90deg; } .r { rotate: -90deg; }
    .view { display: flex; padding-left: 3px; }
    .view button { width: 26px; display: grid; place-items: center; }
  `];

  private drawDay() {
    return svg`
      <path d=${ring(dayHigh, dayLow)} fill="url(#band)"/>
      ${twoTone(dayHigh, "#1f8a74", "#c4122a", 1.2)}
      ${twoTone(dayClose, "#4fcf4f", "#d96064", 2.9)}
      ${dayClose.slice(1).map((p, i) => svg`<rect x=${p[0] - 3} y=${p[1] - 3} width="6" height="6" fill="#f6fbf6" stroke=${p[1] < dayClose[i][1] ? "#58c058" : "#d96064"}/>`)}
      ${twoTone(dayMid, "#c8bf22", "#e337e3", 1.2)}
      ${twoTone(dayEma, "#0a6266", "#d96064", 2.8)}
      ${twoTone(dayLow, "#1c9497", "#5c1238", 1.2)}
      <path d="M1075 468q-1-6-8-5-24 2-27 14l0 10q1 4 6 3 10-1 20 3 10 2 14 0 2-3 2-8 4-8-1-15-3-5-9-7" fill="none" stroke="#0a14e0" stroke-width="1.600"/>`;
  }

  private drawHa() {
    return svg`
      <path d=${ring(haHigh, haLow)} fill="url(#band)"/>
      ${twoTone(haHigh, "#1f8a74", "#c4122a", 1.2)}
      ${candles.map(([h, t, b, l, up], i) => {
        const x = 625.71 + 18.764 * i;
        const Y = (n: number) => 570 + n / 3;
        return svg`<path d="M${x} ${Y(h)}V${Y(l)}" stroke="#24520f" stroke-width="1.200"/>
          <rect x=${x - 8} y=${Y(t)} width="16" height=${(b - t) / 3} fill=${up ? "url(#rise)" : "url(#fall)"} stroke="#2c5a14"/>`;
      })}
      ${twoTone(haMid, "#1d6a74", "#c4122a", 1.2)}
      ${twoTone(haLow, "#1c9497", "#c8124a", 1.2)}
      <path d="M1132 959q-9-5-18-9-18-1-24 4-5 6-3 13 5 5 9 5 18 2 32 1 7-1 7-8 0-5-2-9" fill="none" stroke="#0a14e0" stroke-width="1.800"/>`;
  }

  render() {
    const w = windows[this.name];
    const day = this.name === "day";
    const h = w.base + 17 - w.top;
    return html`
      <div class="title">
        <button class="cell i" aria-label="Tipo grafico"><svg width="20" height="20" viewBox="0 0 20 20"><path d="M5 5v14M14 1v18" stroke="#333"/><rect x="2" y="8" width="6" height="8" fill="#e8484c" stroke="#7a1a1a"/><rect x="11" y="4" width="6" height="11" fill="#3fce48" stroke="#1a6a1f"/></svg></button>
        <button class="cell c" aria-label="Collega">${chain(w.done)}</button>
        <button class="cell sym"><b>.LE0221-LE1220-GZ</b><i class="caret"></i></button>
        <button class="cell uno"><b>1 giorno</b><i class="caret"></i></button>
        <button class="cell per">${w.period}<i class="caret"></i></button>
        <span class="quote"><span class="info">i</span><em>2,975 (-23,72% -0,925)</em><span>15-lug-2020</span><i class="dot"></i><span class="sub">.LE0221-LE1220-GZ</span></span>
        <span class="sys">
          <button aria-label="Riduci"><svg width="12" height="12"><path d="M1 9h10" stroke="#62808e" stroke-width="2"/></svg></button>
          <button aria-label="Ingrandisci"><svg width="11" height="12"><path d="M1.500 1.500h8v9h-8z" fill="none" stroke="#62808e"/></svg></button>
          <button aria-label="Chiudi"><svg width="12" height="12"><path d="M1 1l9 9M10 1L1 10" stroke="#62808e" stroke-width="1.800"/></svg></button>
        </span>
      </div>
      <div class="plot">
        <svg viewBox="615 ${w.top} 775 ${h}">
          <defs>
            <linearGradient id="sky" x2="0" y2="1"><stop offset="0" stop-color="#fff"/><stop offset=".15" stop-color="#fcfdff"/><stop offset="1" stop-color="#d9e5ff"/></linearGradient>
            <linearGradient id="band" x2="0" y2="1"><stop offset="0" stop-color=${day ? "#c2c2c2" : "#d7d7d8"}/><stop offset="1" stop-color=${day ? "#d5dbef" : "#dae2f5"}/></linearGradient>
            <linearGradient id="rise"><stop offset="0" stop-color="#69ee69"/><stop offset="1" stop-color="#43bf43"/></linearGradient>
            <linearGradient id="fall"><stop offset="0" stop-color="#f98484"/><stop offset="1" stop-color="#d45a5c"/></linearGradient>
            <linearGradient id="tag" x2="0" y2="1"><stop offset="0" stop-color="#f4f8ff"/><stop offset="1" stop-color="#c9dbe8"/></linearGradient>
            <linearGradient id="gold" x2="0" y2="1"><stop offset="0" stop-color="#ffe04a"/><stop offset="1" stop-color="#e8b80c"/></linearGradient>
            <clipPath id="frame"><rect x="615" y=${w.top} width="733" height=${w.base - w.top}/></clipPath>
          </defs>
          <rect x="615" y=${w.top} width="733" height=${w.base - w.top} fill="url(#sky)"/>
          <g clip-path="url(#frame)" fill="none">${day ? this.drawDay() : this.drawHa()}</g>
          <path d="M1348.500 ${w.top}V${w.base}.5H615" fill="none" stroke="#6d8492"/>
          <text x="616" y=${w.base - 3}>© ProRealTime.com</text><text class="ital" x="717" y=${w.base - 3}>Dati di fine giornata</text>
          ${w.prices.map(([y, t]) => svg`<path d="M1348 ${y}.5h5" stroke="#6d8492"/><text x="1355" y=${y + 4}>${t}</text>`)}
          ${w.tags.map(([y, t, c, k]) => svg`<path d="M1348 ${y + 7.5}h5" stroke=${c}/>
            <rect x="1353.500" y=${y + 0.5} width=${k ? 30 : 36} height="14" fill=${k === "gold" ? "url(#gold)" : "url(#tag)"} stroke="#6d8492"/>
            <text x="1355" y=${y + 12} style="fill:${c}">${t}</text>`)}
          ${[...w.dates.map((d) => d[0]), ...w.ticks].map((x) => svg`<path d="M${x}.5 ${w.base}v3" stroke="#6d8492"/>`)}
          ${w.dates.map(([x, t]) => svg`<text class=${/[a-z]/.test(t) ? "mid bold" : "mid"} x=${x} y=${w.base + 14}>${t}</text>`)}
          ${day ? svg`<rect class="tip" x="1140.500" y="531.500" width="82" height="13"/><text class="mid" x="1181" y="543">mar 28-lug-2020</text>` : nothing}
        </svg>
        <div class="legend">${w.legend.map(([t, cs]) => html`<button><span class="sw">${cs.map((c) => html`<i style="background:${c}"></i>`)}</span>${t}</button>`)}</div>
      </div>
      <div class="tools">
        <button class="pen" aria-label="Disegna">${pencil}</button>
        <button class="drop" aria-label="Altri disegni"><i class="caret"></i></button>
        <button class="ind white"><svg width="20" height="20" viewBox="0 0 20 20"><path d="M1 8q4-10 9 0 5 6 9 0" fill="none" stroke="#2fa84a" stroke-width="1.500"/><path d="M1 4q5-4 9 3 4 5 9 5" fill="none" stroke="#c96a5a"/><path d="M1 19v-5h3v2h3v-3h4v3h4v-2h4v5z" fill="#17b32c"/><path d="M4 16h3v3H4zM11 16h4v3h-4z" fill="#e0352f"/></svg>Indicatori</button>
        <button class="drop white" aria-label="Altri indicatori"><i class="caret"></i></button>
        <button class="share" aria-label="Condividi"><svg width="16" height="16" viewBox="0 0 16 16"><path d="M13 3L3 8l10 5" fill="none" stroke="#fff" stroke-width="1.500"/><circle cx="13" cy="3" r="2.500" fill="#fff"/><circle cx="3" cy="8" r="2.500" fill="#fff"/><circle cx="13" cy="13" r="2.500" fill="#fff"/></svg></button>
        <button class="ana white"><svg width="19" height="18" viewBox="0 0 19 18"><path d="M8 1H1v16h7v-3H5V4h3z" fill="#1f4a7c"/><path d="M11 1h7v16h-7v-3h3V4h-3z" fill="#8d9499"/></svg>Analizzare</button>
        <button class="ic" aria-label="Chat"><svg width="16" height="18" viewBox="0 0 16 18"><path d="M1 1h7l2 2v8H1z" fill="#f5f8fa" stroke="#8ba"/><rect x="3" y="6" width="13" height="8" rx="2" fill="#3a72dc"/><path d="M6 13v4l4-4z" fill="#3a72dc"/><path d="M6 10h8" stroke="#fff" stroke-width="2" stroke-dasharray="2 1"/></svg></button>
        <button class="ic" aria-label="Finestre"><svg width="19" height="18" viewBox="0 0 19 18"><rect x="1" y="1" width="12" height="9" fill="#fff" stroke="#1d4fa8"/><path d="M1 2h12" stroke="#1d4fa8" stroke-width="2"/><rect x="6" y="6" width="12" height="11" fill="#fff" stroke="#1d4fa8"/><path d="M6 7h12" stroke="#1d4fa8" stroke-width="2"/><path d="M8 14q2-5 4-1t4-2" fill="none" stroke="#2fa84a"/><path d="M3 8l3-3" stroke="#d33"/></svg></button>
        <button class="ic" aria-label="Opzioni"><svg width="18" height="18" viewBox="0 0 18 18"><path d="M4 7v10M14 0v17" stroke="#333"/><rect x="1" y="9" width="6" height="6" fill="#e0353a" stroke="#6a1010"/><rect x="11" y="2" width="5" height="12" fill="#34c63f" stroke="#126a1a"/><path d="M3 16l6-6q-1-4 2-5v3l3 1 1-2q1 4-3 5h-2l-5 5z" fill="#fff" stroke="#111"/></svg></button>
        <button class="w18" aria-label="Comprimi">«</button>
        <div class="scroll"><button aria-label="Indietro"><i class="caret l"></i></button><i class="track"></i><i class="thumb" style="width:${w.thumb}px"></i><button class="end" aria-label="Avanti"><i class="caret r"></i></button></div>
        <div class="view">
          <button aria-label="Vai alla data"><svg width="22" height="20" viewBox="0 0 22 20"><rect x="5" y="4" width="15" height="13" fill="#f4f8fa" stroke="#3a86ac"/><path d="M5 5h15" stroke="#2f86b4" stroke-width="4"/><path d="M8 1v4M12 1v4M17 1v4" stroke="#2f86b4" stroke-width="2"/><path d="M9 8v8M13 8v8M17 8v8M6 12h14" stroke="#bcd"/><path d="M1 14l6-5v3h7v5H7v3z" fill="#2fc43e" stroke="#148424" stroke-width=".6"/></svg></button>
          <button aria-label="Annulla"><svg width="18" height="18" viewBox="0 0 18 18">${curve(day ? "#6f9fcb" : "#1c6fd6")}</svg></button>
          <button aria-label="Ripeti"><svg width="18" height="18" viewBox="0 0 18 18"><g transform="translate(18 0) scale(-1 1)">${curve("#6f9fcb")}</g></svg></button>
          <button aria-label="Adatta">${lens(svg`<path d="M17 1v9M15 3l2-2 2 2M15 8l2 2 2-2M0 18h10M2 16l-2 2 2 2M8 16l2 2-2 2" stroke="#0a3fe0" fill="none" stroke-width="1.400"/>`)}</button>
          <button aria-label="Riduci zoom">${lens(svg`<path d="M4 7.500h7" stroke="#0a1ee0" stroke-width="2"/>`)}</button>
          <button aria-label="Aumenta zoom">${lens(svg`<path d="M4 7.500h7M7.500 4v7" stroke="#0a1ee0" stroke-width="2"/>`)}</button>
          <button aria-label="Unità"><svg width="18" height="16" viewBox="0 0 18 16"><rect y="0" width="18" height="6" fill="#f4f4f4"/><path d="M1 3h16" stroke="#222" stroke-width="3" stroke-dasharray="3 1"/><path d="M7 7h4v3h3l-5 5-5-5h3z" fill="#1f6ac0"/></svg></button>
        </div>
      </div>`;
  }
}

/* ---------- browser page at the right ---------- */

@customElement("web-chart")
export class WebChart extends LitElement {
  static styles = [base, css`
    :host { display: flex; flex-direction: column; min-height: 0; overflow: hidden; background: #fff; font: 11px/14px "DejaVu Sans", Verdana, sans-serif; }
    .bar { display: flex; align-items: flex-start; flex: none; height: 40px; background: #f8f9fa; border-top: 2px solid var(--dark); border-bottom: 1px solid #d6d6d6; overflow: hidden; }
    .find { display: flex; flex: 0 0 242px; height: 26px; margin-top: -16px; background: #fff; border: 1px solid #b4b4b4; border-left: 0; align-items: center; }
    input { flex: 1; min-width: 0; border: 0; background: none; padding: 0; height: 24px; font: 14px "Liberation Sans", Arial, sans-serif; color: #222; }
    .find svg { margin: 0 8px 0 0; }
    .bar > svg { margin-left: auto; }
    .strip { display: flex; flex: none; align-items: center; justify-content: flex-end; height: 28px; margin-right: 3px; padding: 0 6px; border: 1px solid #bcbcbc; border-left: 0; border-top: 0; background: linear-gradient(#e6e6e6, #f1f1f1); }
    .first { margin-top: 47px; height: 30px; border-top: 1px solid #bcbcbc; }
    a { color: #1d84c4; text-decoration: none; font-size: 11px; }
    .graph { flex: 1; min-height: 0; }
    .graph svg { width: 100%; height: 100%; }
    text { font: 11px "DejaVu Sans", Verdana, sans-serif; fill: #85898e; }
    .mid { text-anchor: middle; }
    .hscroll { display: flex; flex: none; height: 16px; background: #f0f0f0; justify-content: space-between; align-items: center; padding-right: 2px; }
    .hscroll i { width: 89%; height: 100%; background: #cdcdcd; }
  `];

  render() {
    const xs = [1391, 1409, 1460, 1512, 1665, 1717, 1768];
    const poly = (ys: number[]) => xs.map((x, i) => `${x},${ys[i] + 0.5}`).join(" ");
    const price = [579, 567, 601, 643, 608, 518, 594];
    const rows = Array.from({ length: 13 }, (_, i) => 235.5 + i * 41.4);
    const rsi: [number, string][] = [[793, "65.000"], [816, "60.000"], [840, "55.000"], [863, "50.000"], [886, "45.000"], [909, "40.000"], [933, "35.000"]];
    return html`
      <div class="bar">
        <label class="find"><input aria-label="Cerca" value="itori trading cot" /><svg width="10" height="14"><path d="M3 3l5 4-5 5" transform="translate(0 4)" fill="none" stroke="#555" stroke-width="2"/></svg></label>
        <svg width="142" height="16" viewBox="0 0 142 16" fill="none" stroke="#454a4e" stroke-width="2"><path d="M8 1h9M35 0v1M39 0v1M46 0l2 2M66 0q0 1 3 1h7q3 0 3-1M98 0q5 3 9 0M138 1h4"/><path d="M125.500 0v13" stroke="#ccc" stroke-width="1"/></svg>
      </div>
      <div class="strip first"><a href="#">Remove all indicators</a></div>
      <div class="strip"></div>
      <div class="graph"><svg viewBox="1391 201 508 823" fill="none">
        ${rows.map((y, i) => svg`<path d="M1391 ${Math.floor(y)}.5H${i % 4 ? 1822 : 1828}" stroke=${i % 4 ? "#e4e4e4" : "#c4c6c8"}/>`)}
        <path d="M1614.500 235V732" stroke="#e0e0e0"/><path d="M1822.500 235V732" stroke="#b8bcc0"/>
        ${["4.800", "4.200", "3.600", "3.000"].map((t, i) => svg`<text x="1834" y=${239 + Math.round(i * 165.6)}>${t}</text>`)}
        <polyline points=${poly([335, 335, 333, 325, 325, 325, 324])} stroke="#cc4034" stroke-width="1.200"/>
        <polyline points=${poly([478, 478, 485, 492, 498, 498, 503])} stroke="#f5cf5a" stroke-width="1.600"/>
        <polyline points=${poly([621, 621, 637, 658, 672, 672, 681])} stroke="#c4302a" stroke-width="1.200"/>
        <polyline points=${poly(price)} stroke="#000" stroke-width="1.800"/>
        ${price.slice(1).map((y, i) => svg`<circle cx=${xs[i + 1]} cy=${y + 0.5} r="2.300" fill="#000"/>`)}
        <polyline points=${poly([893, 889, 898, 909, 896, 864, 887])} stroke="#74b2ea" stroke-width="1.600"/>
        <text class="mid" x="1613" y="749">12</text><text class="mid" x="1613" y="949">12</text>
        <path d="M1822.500 793V933" stroke="#b8bcc0"/>
        ${rsi.map(([y, t]) => svg`<path d="M1822 ${y}.5h6" stroke="#b8bcc0"/><text x="1834" y=${y + 4}>${t}</text>`)}
        <path d="M1391 958h431" stroke="#e2e2e2" stroke-width="2"/><path d="M1411.500 958v40" stroke="#b8b8b8"/><text x="1417" y="974">Oct</text>
        <path d="M1696 589q12-3 26-2 3 5 0 7-3 7-13 6 11 4 10 14-1 5-7 5l-14 1M1740 620q-5 4-9 15M1757 586l-5 1-1 19q16 1 21 11 2 9-10 11h-12M1750 587l18-3M1805 599q-10-3-9 16 6 9 15 7 9-2 8-10-4-7-9-9-4-6-7-2" stroke="#ec1515" stroke-width="1.800" stroke-linecap="round"/>
      </svg></div>
      <div class="hscroll"><i></i><svg width="6" height="10"><path d="M1 1l4 4-4 4" fill="none" stroke="#444" stroke-width="2"/></svg></div>`;
  }
}

/* ---------- page ---------- */

@customElement("app-root")
export class AppRoot extends LitElement {
  static styles = [base, css`
    :host { display: flex; flex-direction: column; height: 100vh; overflow: hidden; background: #2b2f3a; }
    .menu { display: flex; flex: none; height: 26px; background: linear-gradient(#a9cdf9, #8db5ea); border: solid #4f74a0; border-width: 1px 0; white-space: nowrap; }
    .logo { display: flex; align-items: center; gap: 5px; width: 97px; padding-left: 4px; background: linear-gradient(#40484f, #23282d); line-height: 11px; color: #fff; font-size: 11px; }
    .logo b { display: block; color: #f4e11c; }
    nav { display: flex; }
    nav button { padding: 0 6px; }
    nav button + button { padding-left: 5px; }
    .search { display: flex; align-items: center; flex: 0 0 198px; background: #fff; padding: 0 3px 0 4px; }
    .search input { flex: 1; min-width: 0; border: 0; padding: 0; background: none; font-style: italic; outline: 0; }
    .search input::placeholder { color: #9aa0a4; opacity: 1; }
    .right { display: flex; margin-left: auto; }
    .right button { border-right: 1px solid #5b83b4; padding: 0 4px; }
    .right .sq { width: 26px; padding: 0 2px; background: #8b9fa9; }
    .right .fl { width: 25px; padding: 0 4px; }
    .right label { display: flex; align-items: center; gap: 4px; padding: 0 3px 0 4px; }
    .right input { appearance: none; width: 10px; height: 10px; background: #c4ddfb; border: 1px solid #3d6fae; }
    .tools { display: flex; flex: none; height: 30px; padding-left: 3px; background: var(--steel); overflow: hidden; }
    .tools button { width: 26px; flex: none; }
    .tools svg { overflow: visible; }
    .tools .on { background: #8ba5b0; box-shadow: inset 0 0 0 1px #7a939f; }
    main { flex: 1; min-height: 0; display: grid; grid-template-columns: minmax(0, 613fr) minmax(0, 778fr) minmax(0, 508fr); grid-template-rows: minmax(0, 514fr) minmax(0, 470fr); }
    web-chart { grid-column: 3; grid-row: 1 / 3; }
    .foot { flex: none; height: 1px; background: linear-gradient(90deg, #2b2f3a 48px, #b9bcc0 48px, #b9bcc0 391px, #2b2f3a 391px); }
  `];

  render() {
    return html`
      <div class="menu">
        <div class="logo"><svg width="15" height="18" viewBox="0 0 15 18"><path d="M4 5v11M12 0v15" stroke="#999"/><rect x="1" y="7" width="5" height="7" fill="#f0383c"/><rect x="9" y="3" width="5" height="9" fill="#2fd040"/></svg><span><b>ProRealTime</b>Complete</span></div>
        <nav>${["File", "Visualizza", "Trading", "Social", "Oggetti", "Impostazioni", "Aiuto"].map((t) => html`<button>${t}</button>`)}</nav>
        <label class="search"><input placeholder="Cercare..." aria-label="Cercare" /><svg width="16" height="16" viewBox="0 0 16 16"><circle cx="10" cy="5" r="4" fill="none" stroke="#222"/><path d="M7 8l-5 6" stroke="#222" stroke-width="2"/></svg></label>
        <div class="right">
          <button class="sq" aria-label="Disegna">${pencil}</button>
          <button class="fl" aria-label="Bandiera"><svg width="16" height="18" viewBox="0 0 16 18"><path d="M3 3v14" stroke="#e8e4d0" stroke-width="2"/><path d="M3 3q3-3 6 0t6 0v8q-3 2-6 0t-6 0z" fill="#ffc61a" stroke="#e09a00" stroke-width=".6"/></svg></button>
          <button>UFFICIO</button>
          <label><input type="checkbox" />Compra/Vendi</label>
        </div>
      </div>
      <div class="tools">${drawTools.map(([n, g], i) => html`<button class=${i ? "" : "on"} aria-label=${n}><svg width="26" height="30" viewBox="0 0 26 30" fill="none">${g}</svg></button>`)}</div>
      <main>
        <style-panel mode="line"></style-panel>
        <chart-window name="day"></chart-window>
        <web-chart></web-chart>
        <style-panel mode="heikin"></style-panel>
        <chart-window name="ha"></chart-window>
      </main>
      <div class="foot"></div>`;
  }
}
